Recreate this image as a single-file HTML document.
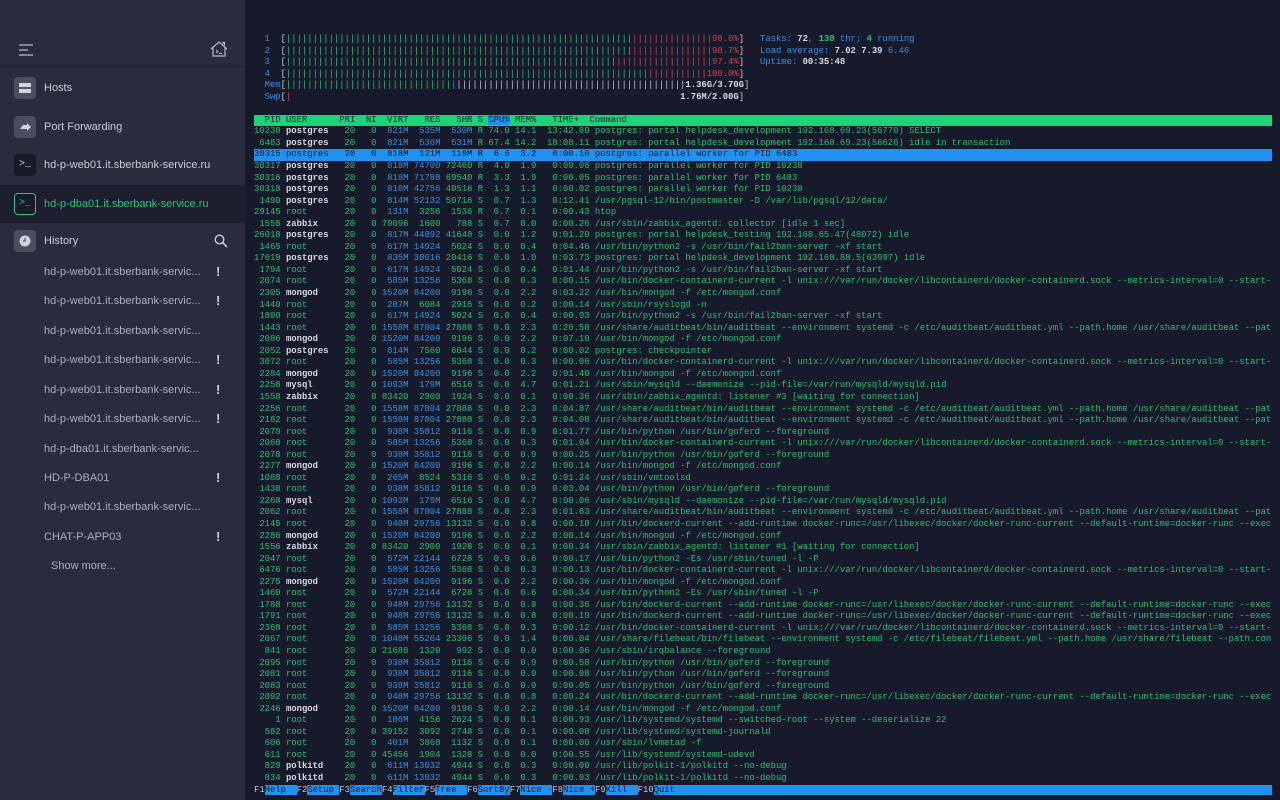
<!DOCTYPE html>
<html><head><meta charset="utf-8"><style>
*{margin:0;padding:0;box-sizing:border-box}
body{width:1280px;height:800px;overflow:hidden;background:#171a2a;font-family:"Liberation Sans",sans-serif;position:relative}
#sb{position:absolute;left:0;top:0;width:245px;height:800px;background:#292c3d}
#sb .top{position:absolute;left:0;top:0;width:245px;height:67px;border-bottom:1px solid #20222f}
.it{position:absolute;left:0;width:245px;height:38px;color:#c9ccd6;font-size:11px}
.it .ic{position:absolute;left:14px;top:8px;width:22px;height:22px;border-radius:4px;background:#4a4e5e}
.it .tx{position:absolute;left:44px;top:13px}
.hi{position:absolute;left:44px;color:#a9adba;font-size:11px}
.ex{position:absolute;left:216px;width:3px;color:#c9ccd6;font-weight:bold;font-size:13px}
#t{position:absolute;left:254px;top:34px;width:1018px;font-family:"Liberation Mono",monospace;font-size:8.9px;color:#2fbf73;overflow:hidden}
#t div{height:11.55px;line-height:11.55px;white-space:pre;overflow:hidden}
b{color:#d6d9e2;font-weight:bold}
i{font-style:normal;color:#3a8fe0}
.r{color:#d4404e}.g{color:#2fbf73}.w{color:#c6c8d0}.bl{color:#3a8fe0}.c{color:#3a8fe0}
.hdr{background:#1fd276;color:#142030}
.sel{background:#2192f0;color:#0f1a2a}
.sel b,.sel i{color:#0f1a2a;font-weight:normal}
.fk span{background:#2192f0;color:#111a2a}
#right{position:absolute;left:760px;top:34px;font-family:"Liberation Mono",monospace;font-size:8.9px;line-height:11.55px;color:#3a8fe0;white-space:pre}
</style></head><body>
<div id="sb">
 <div class="top">
  <svg style="position:absolute;left:18px;top:44px" width="16" height="12" viewBox="0 0 16 12"><path d="M1 1h14M1 6h9M1 11h14" stroke="#b8bcc8" stroke-width="1.3"/></svg>
  <svg style="position:absolute;left:210px;top:41px" width="18" height="16" viewBox="0 0 18 16"><path d="M1 8L9 1l8 7M3 6.5V15h12V6.5M13 3V1.5h1.5V4.5" fill="none" stroke="#b8bcc8" stroke-width="1.2"/><path d="M6 9l2 1.5L6 12M9 12.5h3" fill="none" stroke="#b8bcc8" stroke-width="1"/></svg>
 </div>
 <div class="it" style="top:69px"><div class="ic"><svg width="22" height="22"><rect x="5" y="6" width="12" height="4" fill="#d0d3dc"/><rect x="5" y="12" width="12" height="4" fill="#d0d3dc"/></svg></div><div class="tx">Hosts</div></div>
 <div class="it" style="top:108px"><div class="ic"><svg width="22" height="22"><path d="M6 13l3-4h4V7l4 4-4 4v-2H9z" fill="#d0d3dc"/></svg></div><div class="tx">Port Forwarding</div></div>
 <div class="it" style="top:146px"><div class="ic" style="background:#181a27;color:#d0d3dc;font-size:10px;font-family:'Liberation Mono',monospace;text-align:center;line-height:22px">&gt;_</div><div class="tx">hd-p-web01.it.sberbank-service.ru</div></div>
 <div class="it" style="top:185px;background:#1d1f2e;color:#2fc27a"><div class="ic" style="background:#181a27;border:1.3px solid #2fc27a;color:#2fc27a;font-size:10px;font-family:'Liberation Mono',monospace;text-align:center;line-height:20px">&gt;_</div><div class="tx">hd-p-dba01.it.sberbank-service.ru</div></div>
 <div class="it" style="top:222px"><div class="ic"><svg width="22" height="22"><circle cx="11" cy="11" r="5.5" fill="#d0d3dc"/><path d="M11 8v3h-2" stroke="#4a4e5e" stroke-width="1.2" fill="none"/></svg></div><div class="tx">History</div>
  <svg style="position:absolute;left:214px;top:12px" width="14" height="14"><circle cx="5.5" cy="5.5" r="4.3" fill="none" stroke="#c9ccd6" stroke-width="1.4"/><path d="M8.7 8.7L13 13" stroke="#c9ccd6" stroke-width="1.6"/></svg></div>
 <div class="hi" style="top:266px">hd-p-web01.it.sberbank-servic...</div><div class="ex" style="top:264px">!</div>
 <div class="hi" style="top:295px">hd-p-web01.it.sberbank-servic...</div><div class="ex" style="top:293px">!</div>
 <div class="hi" style="top:325px">hd-p-web01.it.sberbank-servic...</div>
 <div class="hi" style="top:354px">hd-p-web01.it.sberbank-servic...</div><div class="ex" style="top:352px">!</div>
 <div class="hi" style="top:384px">hd-p-web01.it.sberbank-servic...</div><div class="ex" style="top:382px">!</div>
 <div class="hi" style="top:413px">hd-p-web01.it.sberbank-servic...</div><div class="ex" style="top:411px">!</div>
 <div class="hi" style="top:443px">hd-p-dba01.it.sberbank-servic...</div>
 <div class="hi" style="top:472px">HD-P-DBA01</div><div class="ex" style="top:470px">!</div>
 <div class="hi" style="top:501px">hd-p-web01.it.sberbank-servic...</div>
 <div class="hi" style="top:531px">CHAT-P-APP03</div><div class="ex" style="top:529px">!</div>
 <div class="hi" style="top:560px;left:51px">Show more...</div>
</div>
<div id="right">Tasks: <b>72</b>, <b class="g">138</b> thr; <b class="g">4</b> running
Load average: <b>7.02</b> <b>7.39</b> 6.46
Uptime: <b>00:35:48</b></div>
<div id="t">
<div><span class="bl">  1  </span><span class="w">[</span>|||||||||||||||||||||||||||||||||||||||||||||||||||||||||||||||||<span class="r">|||||||||||||||98.0%</span><span class="w">]</span></div>
<div><span class="bl">  2  </span><span class="w">[</span>|||||||||||||||||||||||||||||||||||||||||||||||||||||||||||||||||<span class="r">|||||||||||||||98.7%</span><span class="w">]</span></div>
<div><span class="bl">  3  </span><span class="w">[</span>||||||||||||||||||||||||||||||||||||||||||||||||||||||||||||||<span class="r">||||||||||||||||||97.4%</span><span class="w">]</span></div>
<div><span class="bl">  4  </span><span class="w">[</span>||||||||||||||||||||||||||||||||||||||||||||||||||||||||||||||||||||<span class="r">|||||||||||100.0%</span><span class="w">]</span></div>
<div><span class="bl">  Mem</span><span class="w">[</span>|||||||||||||||||||||||||||||||<span class="bl">|</span><span class="w">|||||||||||||||||||||||||||||||||||||||||||<b>1.36G/3.70G</b>]</span></div>
<div><span class="bl">  Swp</span><span class="w">[</span><span class="r">|</span>                                                                         <span class="w"><b>1.76M/2.00G</b>]</span></div>
<div> </div>
<div class="hdr">  PID USER      PRI  NI  VIRT   RES   SHR S <span style="background:#2192f0">CPU%</span> MEM%   TIME+  Command                                                                                                                                       </div>
<div>10238 <b>postgres</b>   20   0 <i> 821M  535M  530M</i> R 74.0 14.1  13:42.80 postgres: portal helpdesk_development 192.168.69.23(56770) SELECT</div>
<div> 6483 <b>postgres</b>   20   0 <i> 821M  536M  531M</i> R 67.4 14.2  18:08.11 postgres: portal helpdesk_development 192.168.69.23(56626) idle in transaction</div>
<div class="sel">30315 <b>postgres</b>   20   0 <i> 818M  121M  119M</i> R  6.6  3.2   0:00.10 postgres: parallel worker for PID 6483                                                                                                                                              </div>
<div>30317 <b>postgres</b>   20   0 <i> 818M 74700</i> 72460 R  4.0  1.9   0:00.06 postgres: parallel worker for PID 10238</div>
<div>30316 <b>postgres</b>   20   0 <i> 818M 71788</i> 69540 R  3.3  1.9   0:00.05 postgres: parallel worker for PID 6483</div>
<div>30318 <b>postgres</b>   20   0 <i> 818M 42756</i> 40516 R  1.3  1.1   0:00.02 postgres: parallel worker for PID 10238</div>
<div> 1490 <b>postgres</b>   20   0 <i> 814M 52132</i> 50716 S  0.7  1.3   0:12.41 /usr/pgsql-12/bin/postmaster -D /var/lib/pgsql/12/data/</div>
<div>29145 root       20   0 <i> 131M</i>  3256  1536 R  0.7  0.1   0:00.43 htop</div>
<div> 1555 <b>zabbix</b>     20   0 79096  1600   788 S  0.7  0.0   0:00.26 /usr/sbin/zabbix_agentd: collector [idle 1 sec]</div>
<div>26018 <b>postgres</b>   20   0 <i> 817M 44892</i> 41648 S  0.0  1.2   0:01.20 postgres: portal helpdesk_testing 192.168.65.47(48072) idle</div>
<div> 1465 root       20   0 <i> 617M 14924</i>  5024 S  0.0  0.4   0:04.46 /usr/bin/python2 -s /usr/bin/fail2ban-server -xf start</div>
<div>17619 <b>postgres</b>   20   0 <i> 835M 38016</i> 20416 S  0.0  1.0   0:03.73 postgres: portal helpdesk_development 192.168.88.5(63997) idle</div>
<div> 1794 root       20   0 <i> 617M 14924</i>  5024 S  0.0  0.4   0:01.44 /usr/bin/python2 -s /usr/bin/fail2ban-server -xf start</div>
<div> 2074 root       20   0 <i> 585M 13256</i>  5368 S  0.0  0.3   0:00.15 /usr/bin/docker-containerd-current -l unix:///var/run/docker/libcontainerd/docker-containerd.sock --metrics-interval=0 --start-timeout 2m</div>
<div> 2305 <b>mongod</b>     20   0 <i>1520M 84200</i>  9196 S  0.0  2.2   0:03.22 /usr/bin/mongod -f /etc/mongod.conf</div>
<div> 1440 root       20   0 <i> 287M</i>  6084  2916 S  0.0  0.2   0:00.14 /usr/sbin/rsyslogd -n</div>
<div> 1800 root       20   0 <i> 617M 14924</i>  5024 S  0.0  0.4   0:00.93 /usr/bin/python2 -s /usr/bin/fail2ban-server -xf start</div>
<div> 1443 root       20   0 <i>1558M 87804</i> 27888 S  0.0  2.3   0:26.58 /usr/share/auditbeat/bin/auditbeat --environment systemd -c /etc/auditbeat/auditbeat.yml --path.home /usr/share/auditbeat --path.config</div>
<div> 2086 <b>mongod</b>     20   0 <i>1520M 84200</i>  9196 S  0.0  2.2   0:07.10 /usr/bin/mongod -f /etc/mongod.conf</div>
<div> 2052 <b>postgres</b>   20   0 <i> 814M</i>  7560  6044 S  0.0  0.2   0:00.02 postgres: checkpointer</div>
<div> 3072 root       20   0 <i> 585M 13256</i>  5368 S  0.0  0.3   0:00.06 /usr/bin/docker-containerd-current -l unix:///var/run/docker/libcontainerd/docker-containerd.sock --metrics-interval=0 --start-timeout 2m</div>
<div> 2284 <b>mongod</b>     20   0 <i>1520M 84200</i>  9196 S  0.0  2.2   0:01.40 /usr/bin/mongod -f /etc/mongod.conf</div>
<div> 2258 <b>mysql</b>      20   0 <i>1093M  179M</i>  6516 S  0.0  4.7   0:01.21 /usr/sbin/mysqld --daemonize --pid-file=/var/run/mysqld/mysqld.pid</div>
<div> 1558 <b>zabbix</b>     20   0 83420  2900  1924 S  0.0  0.1   0:00.36 /usr/sbin/zabbix_agentd: listener #3 [waiting for connection]</div>
<div> 2256 root       20   0 <i>1558M 87804</i> 27888 S  0.0  2.3   0:04.87 /usr/share/auditbeat/bin/auditbeat --environment systemd -c /etc/auditbeat/auditbeat.yml --path.home /usr/share/auditbeat --path.config</div>
<div> 2182 root       20   0 <i>1558M 87804</i> 27888 S  0.0  2.3   0:04.08 /usr/share/auditbeat/bin/auditbeat --environment systemd -c /etc/auditbeat/auditbeat.yml --path.home /usr/share/auditbeat --path.config</div>
<div> 2079 root       20   0 <i> 938M 35812</i>  9116 S  0.0  0.9   0:01.77 /usr/bin/python /usr/bin/goferd --foreground</div>
<div> 2068 root       20   0 <i> 585M 13256</i>  5368 S  0.0  0.3   0:01.04 /usr/bin/docker-containerd-current -l unix:///var/run/docker/libcontainerd/docker-containerd.sock --metrics-interval=0 --start-timeout 2m</div>
<div> 2078 root       20   0 <i> 938M 35812</i>  9116 S  0.0  0.9   0:00.25 /usr/bin/python /usr/bin/goferd --foreground</div>
<div> 2277 <b>mongod</b>     20   0 <i>1520M 84200</i>  9196 S  0.0  2.2   0:00.14 /usr/bin/mongod -f /etc/mongod.conf</div>
<div> 1088 root       20   0 <i> 265M</i>  8524  5316 S  0.0  0.2   0:01.24 /usr/sbin/vmtoolsd</div>
<div> 1438 root       20   0 <i> 938M 35812</i>  9116 S  0.0  0.9   0:03.04 /usr/bin/python /usr/bin/goferd --foreground</div>
<div> 2268 <b>mysql</b>      20   0 <i>1093M  179M</i>  6516 S  0.0  4.7   0:00.06 /usr/sbin/mysqld --daemonize --pid-file=/var/run/mysqld/mysqld.pid</div>
<div> 2062 root       20   0 <i>1558M 87804</i> 27888 S  0.0  2.3   0:01.63 /usr/share/auditbeat/bin/auditbeat --environment systemd -c /etc/auditbeat/auditbeat.yml --path.home /usr/share/auditbeat --path.config</div>
<div> 2145 root       20   0 <i> 948M 29756</i> 13132 S  0.0  0.8   0:00.18 /usr/bin/dockerd-current --add-runtime docker-runc=/usr/libexec/docker/docker-runc-current --default-runtime=docker-runc --exec-opt</div>
<div> 2286 <b>mongod</b>     20   0 <i>1520M 84200</i>  9196 S  0.0  2.2   0:00.14 /usr/bin/mongod -f /etc/mongod.conf</div>
<div> 1556 <b>zabbix</b>     20   0 83420  2900  1928 S  0.0  0.1   0:00.34 /usr/sbin/zabbix_agentd: listener #1 [waiting for connection]</div>
<div> 2047 root       20   0 <i> 572M 22144</i>  6728 S  0.0  0.6   0:00.17 /usr/bin/python2 -Es /usr/sbin/tuned -l -P</div>
<div> 6476 root       20   0 <i> 585M 13256</i>  5368 S  0.0  0.3   0:00.13 /usr/bin/docker-containerd-current -l unix:///var/run/docker/libcontainerd/docker-containerd.sock --metrics-interval=0 --start-timeout 2m</div>
<div> 2275 <b>mongod</b>     20   0 <i>1520M 84200</i>  9196 S  0.0  2.2   0:00.36 /usr/bin/mongod -f /etc/mongod.conf</div>
<div> 1460 root       20   0 <i> 572M 22144</i>  6728 S  0.0  0.6   0:00.34 /usr/bin/python2 -Es /usr/sbin/tuned -l -P</div>
<div> 1788 root       20   0 <i> 948M 29756</i> 13132 S  0.0  0.8   0:00.36 /usr/bin/dockerd-current --add-runtime docker-runc=/usr/libexec/docker/docker-runc-current --default-runtime=docker-runc --exec-opt</div>
<div> 1791 root       20   0 <i> 948M 29756</i> 13132 S  0.0  0.8   0:00.19 /usr/bin/dockerd-current --add-runtime docker-runc=/usr/libexec/docker/docker-runc-current --default-runtime=docker-runc --exec-opt</div>
<div> 2368 root       20   0 <i> 585M 13256</i>  5368 S  0.0  0.3   0:00.12 /usr/bin/docker-containerd-current -l unix:///var/run/docker/libcontainerd/docker-containerd.sock --metrics-interval=0 --start-timeout 2m</div>
<div> 2067 root       20   0 <i>1048M 55264</i> 23396 S  0.0  1.4   0:00.04 /usr/share/filebeat/bin/filebeat --environment systemd -c /etc/filebeat/filebeat.yml --path.home /usr/share/filebeat --path.config</div>
<div>  841 root       20   0 21688  1320   992 S  0.0  0.0   0:00.06 /usr/sbin/irqbalance --foreground</div>
<div> 2095 root       20   0 <i> 938M 35812</i>  9116 S  0.0  0.9   0:00.58 /usr/bin/python /usr/bin/goferd --foreground</div>
<div> 2081 root       20   0 <i> 938M 35812</i>  9116 S  0.0  0.9   0:00.08 /usr/bin/python /usr/bin/goferd --foreground</div>
<div> 2083 root       20   0 <i> 938M 35812</i>  9116 S  0.0  0.9   0:00.05 /usr/bin/python /usr/bin/goferd --foreground</div>
<div> 2092 root       20   0 <i> 948M 29756</i> 13132 S  0.0  0.8   0:00.24 /usr/bin/dockerd-current --add-runtime docker-runc=/usr/libexec/docker/docker-runc-current --default-runtime=docker-runc --exec-opt</div>
<div> 2246 <b>mongod</b>     20   0 <i>1520M 84200</i>  9196 S  0.0  2.2   0:00.14 /usr/bin/mongod -f /etc/mongod.conf</div>
<div>    1 root       20   0 <i> 186M</i>  4156  2624 S  0.0  0.1   0:00.93 /usr/lib/systemd/systemd --switched-root --system --deserialize 22</div>
<div>  582 root       20   0 39152  3092  2748 S  0.0  0.1   0:00.08 /usr/lib/systemd/systemd-journald</div>
<div>  606 root       20   0 <i> 401M</i>  3868  1132 S  0.0  0.1   0:00.00 /usr/sbin/lvmetad -f</div>
<div>  611 root       20   0 45456  1904  1328 S  0.0  0.0   0:00.55 /usr/lib/systemd/systemd-udevd</div>
<div>  829 <b>polkitd</b>    20   0 <i> 611M 13032</i>  4944 S  0.0  0.3   0:00.00 /usr/lib/polkit-1/polkitd --no-debug</div>
<div>  834 <b>polkitd</b>    20   0 <i> 611M 13032</i>  4944 S  0.0  0.3   0:00.03 /usr/lib/polkit-1/polkitd --no-debug</div>
<div class="fk w">F1<span>Help  </span>F2<span>Setup </span>F3<span>Search</span>F4<span>Filter</span>F5<span>Tree  </span>F6<span>SortBy</span>F7<span>Nice -</span>F8<span>Nice +</span>F9<span>Kill  </span>F10<span>Quit                                                                                                                                                                          </span></div>
</div>
</body></html>
